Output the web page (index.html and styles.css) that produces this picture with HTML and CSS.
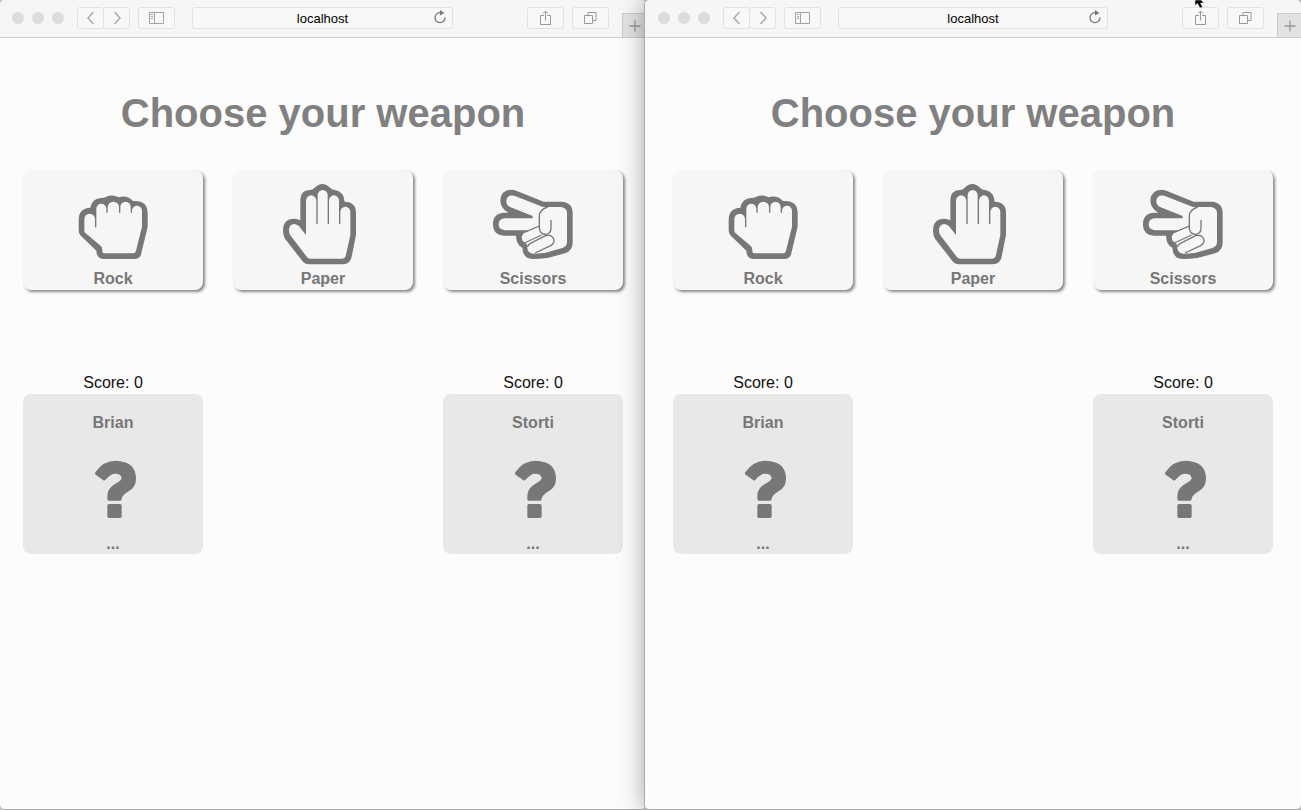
FILE: index.html
```html
<!DOCTYPE html>
<html lang="en">
<head>
<meta charset="utf-8">
<title>Choose your weapon</title>
<link rel="stylesheet" href="styles.css">
</head>
<body>
<svg class="sprites" aria-hidden="true">
  <symbol id="back" viewBox="0 0 12 16"><path d="M8.500 2 3 8l5.500 6" fill="none" stroke="#aaa" stroke-width="1.5"/></symbol>
  <symbol id="forward" viewBox="0 0 12 16"><path d="m3.500 2 5.500 6-5.500 6" fill="none" stroke="#aaa" stroke-width="1.5"/></symbol>
  <symbol id="sidebar" viewBox="0 0 16 12"><path d="M.5.5h14v11H.5zM5.500.5v11M2 2.500h2M2 4.500h2M2 6.500h2" fill="none" stroke="#a2a2a2"/></symbol>
  <symbol id="reload" viewBox="0 0 14 14"><path d="M7.500 2.700A5 5 0 1 0 12 7.500" fill="none" stroke="#777" stroke-width="1.3"/><path d="M7 0v5.500L11.500 3z" fill="#777"/></symbol>
  <symbol id="share" viewBox="0 0 12 16"><path d="M4 5.500H.5v9h10v-9H7M5.500 10.500V1.500M3 3.500l2.500-2.500L8 3.500" fill="none" stroke="#999"/></symbol>
  <symbol id="tabs" viewBox="0 0 14 14"><path d="M.5 4.500h8v8h-8zM4 4.500V1.500h8v8H8.500" fill="none" stroke="#999"/></symbol>
  <symbol id="plus" viewBox="0 0 12 12"><path d="M6 .5v11M.5 6h11" fill="none" stroke="#999" stroke-width="1.3"/></symbol>
  <symbol id="rock" viewBox="157 54 270 270">
    <path fill="#777" fill-rule="evenodd" d="M189 180Q189 144 224 143Q230 115 256 114Q266 114 272 110Q291 102 309 112Q333 104 352 123Q396 120 396 160V200L378 275Q376 297 355 297H265Q243 297 242 272L194 226Q189 220 189 210ZM206 213V178A16 17 0 0 1 238 178V202H242V146A15 15 0 0 1 272 146V158H276V142A17 17 0 0 1 310 142V158H314V141A15.500 16 0 0 1 345 141V158H349V152A15 15 0 0 1 379 152V200L361 272Q359 280 352 280H268Q260 280 260 272Q261 261 253 256L210 220Q206 217 206 213Z"/>
  </symbol>
  <symbol id="paper" viewBox="157 54 270 270">
    <path fill="#777" fill-rule="evenodd" d="M172 212Q172 176 206 176Q216 176 224 181V118Q224 92 252 90Q261 90 266 84Q290 60 314 84Q319 90 328 90Q355 95 357 125Q391 126 391 158V225L379 285Q376 313 350 313H250Q238 313 230 303L178 236Q172 226 172 212ZM190 212Q190 192 206 192Q218 193 226 206L241 225V122A15.500 16 0 0 1 272 122V192H276V106A15 16 0 0 1 306 106V192H310V122A15 16 0 0 1 340 122V192H344V156A15 16 0 0 1 374 156V225L361 284Q359 296 348 296H254Q248 296 243 290L194 226Q190 220 190 212Z"/>
  </symbol>
  <symbol id="scissors" viewBox="157 54 270 270">
    <path fill="#777" fill-rule="evenodd" d="M194 121Q196 89 228 89Q235 89 242 92L324 125H378Q411 127 411 160V248Q411 272 388 280L335 294Q310 297 290 297Q262 296 260 263Q242 255 241 227H205Q172 225 172 192Q172 160 205 158H218Q194 146 194 121ZM212 122Q214 103 236 107L322 141H376Q394 143 394 160V246Q394 260 380 264L330 278Q310 281 292 281Q275 280 275 262Q276 252 268 248Q256 243 259 228Q262 220 268 217L282 211H208Q189 209 189 193Q189 176 208 175H291V168L225 142Q211 136 212 122Z"/>
    <path fill="none" stroke="#777" stroke-width="4" d="M336 141Q311 150 311 168V205Q313 223 330 223Q346 222 346 205V180M311 198L266 217M266 249L318 225M276 260Q278 252 290 247L330 227Q350 222 355 240Q356 250 345 257L298 279"/>
  </symbol>
  <symbol id="unknown" viewBox="157 189 270 303">
    <path fill="#777" d="M240 305Q264 272 300 272Q361 274 361 326Q361 350 340 363Q318 376 318 387Q318 392 313 392H280Q275 392 275 386V378Q275 355 298 342Q318 332 318 324Q316 311 298 311Q285 311 271 328Q267 334 262 330L240 314Q235 310 240 305Z"/>
    <rect x="275" y="402" width="43" height="42" rx="5" fill="#777"/>
  </symbol>
</svg>

<div class="desktop">
  <section class="window" aria-label="Player Brian">
    <header class="toolbar">
      <div class="lights"><i class="light"></i><i class="light"></i><i class="light"></i></div>
      <div class="nav">
        <button class="tool nav-tool" aria-label="Back"><svg width="12" height="16"><use href="#back"/></svg></button>
        <button class="tool nav-tool" aria-label="Forward"><svg width="12" height="16"><use href="#forward"/></svg></button>
      </div>
      <button class="tool" aria-label="Sidebar"><svg width="16" height="12"><use href="#sidebar"/></svg></button>
      <div class="address">
        <input class="address-input" aria-label="Address" value="localhost">
        <button class="reload" aria-label="Reload"><svg width="14" height="14"><use href="#reload"/></svg></button>
      </div>
      <button class="tool" aria-label="Share"><svg width="12" height="16"><use href="#share"/></svg></button>
      <button class="tool tabs" aria-label="Show tabs"><svg width="14" height="14"><use href="#tabs"/></svg></button>
      <button class="new-tab" aria-label="New tab"><svg width="12" height="12"><use href="#plus"/></svg></button>
    </header>
    <main class="game">
      <h1 class="title">Choose your weapon</h1>
      <div class="weapons">
        <button class="weapon"><svg width="90" height="90"><use href="#rock"/></svg>Rock</button>
        <button class="weapon"><svg width="90" height="90"><use href="#paper"/></svg>Paper</button>
        <button class="weapon"><svg width="90" height="90"><use href="#scissors"/></svg>Scissors</button>
      </div>
      <div class="players">
        <div class="player">
          <p class="score">Score: 0</p>
          <div class="player-card"><h2 class="name">Brian</h2><svg width="90" height="101"><use href="#unknown"/></svg><p class="status">...</p></div>
        </div>
        <div class="player">
          <p class="score">Score: 0</p>
          <div class="player-card"><h2 class="name">Storti</h2><svg width="90" height="101"><use href="#unknown"/></svg><p class="status">...</p></div>
        </div>
      </div>
    </main>
  </section>

  <section class="window front" aria-label="Player Storti">
    <header class="toolbar">
      <div class="lights"><i class="light"></i><i class="light"></i><i class="light"></i></div>
      <div class="nav">
        <button class="tool nav-tool" aria-label="Back"><svg width="12" height="16"><use href="#back"/></svg></button>
        <button class="tool nav-tool" aria-label="Forward"><svg width="12" height="16"><use href="#forward"/></svg></button>
      </div>
      <button class="tool" aria-label="Sidebar"><svg width="16" height="12"><use href="#sidebar"/></svg></button>
      <div class="address">
        <input class="address-input" aria-label="Address" value="localhost">
        <button class="reload" aria-label="Reload"><svg width="14" height="14"><use href="#reload"/></svg></button>
      </div>
      <button class="tool share" aria-label="Share"><svg width="12" height="16"><use href="#share"/></svg>
        <svg class="pointer" width="12" height="8" viewBox="0 0 12 8"><path d="M1 0v5.500l2.500-2L6 8l2.500-1L6.500 3H10L7 0z" fill="#000" stroke="#fff" stroke-width=".5"/></svg>
      </button>
      <button class="tool tabs" aria-label="Show tabs"><svg width="14" height="14"><use href="#tabs"/></svg></button>
      <button class="new-tab" aria-label="New tab"><svg width="12" height="12"><use href="#plus"/></svg></button>
    </header>
    <main class="game">
      <h1 class="title">Choose your weapon</h1>
      <div class="weapons">
        <button class="weapon"><svg width="90" height="90"><use href="#rock"/></svg>Rock</button>
        <button class="weapon"><svg width="90" height="90"><use href="#paper"/></svg>Paper</button>
        <button class="weapon"><svg width="90" height="90"><use href="#scissors"/></svg>Scissors</button>
      </div>
      <div class="players">
        <div class="player">
          <p class="score">Score: 0</p>
          <div class="player-card"><h2 class="name">Brian</h2><svg width="90" height="101"><use href="#unknown"/></svg><p class="status">...</p></div>
        </div>
        <div class="player">
          <p class="score">Score: 0</p>
          <div class="player-card"><h2 class="name">Storti</h2><svg width="90" height="101"><use href="#unknown"/></svg><p class="status">...</p></div>
        </div>
      </div>
    </main>
  </section>
</div>
</body>
</html>
```
FILE: styles.css
```css
* { box-sizing: border-box; }

body {
  margin: 0;
  background: #c8c8c8;
  color: #111;
  font: 16px/20px "Liberation Sans", Arial, sans-serif;
}

button, input { font: inherit; color: inherit; margin: 0; padding: 0; }
h1, h2, p { margin: 0; }
svg { display: block; }
.sprites { position: absolute; width: 0; height: 0; }

.desktop {
  display: grid;
  grid-template-columns: 646fr 655fr;
  min-height: 100vh;
  overflow: hidden;
}

.window {
  background: #fcfcfc;
  border-bottom: 1px solid #aaa;
  border-radius: 5px;
}

.front {
  position: relative;
  margin-left: -2px;
  border-left: 1px solid #aaa;
  box-shadow: 0 0 24px rgba(0, 0, 0, .35);
}

.toolbar {
  display: flex;
  align-items: center;
  height: 38px;
  padding-left: 12px;
  background: #f6f6f6;
  border-bottom: 1px solid #ccc;
  border-radius: 5px 5px 0 0;
}
.front .toolbar { padding-left: 13px; }

.lights { display: flex; gap: 8px; margin-right: 13px; }
.light { width: 12px; height: 12px; border-radius: 50%; background: #dcdcdc; }

.nav { display: flex; margin-right: 8px; }
.lights, .nav, .tool, .address { margin-bottom: 1px; }

.tool {
  display: flex;
  align-items: center;
  justify-content: center;
  width: 37px;
  height: 22px;
  background: #f8f8f8;
  border: 1px solid #e2e2e2;
  border-radius: 3px;
}

.nav-tool { width: 27px; margin-bottom: 0; }
.nav-tool + .nav-tool { margin-left: -1px; }

.address {
  position: relative;
  flex: 1;
  margin-left: 17px;
  margin-right: 74px;
}

.address-input {
  display: block;
  width: 100%;
  height: 22px;
  background: #f8f8f8;
  border: 1px solid #e2e2e2;
  border-radius: 3px;
  color: #000;
  font-size: 13px;
  text-align: center;
}

.reload {
  position: absolute;
  top: 3px;
  right: 6px;
  background: none;
  border: 0;
}

.share { position: relative; }
.pointer { position: absolute; top: -8px; left: 11px; }
.tabs { margin-left: 8px; margin-right: 13px; }

.new-tab {
  display: flex;
  align-items: center;
  justify-content: center;
  align-self: flex-end;
  width: 24px;
  height: 24px;
  background: #e2e2e2;
  border: solid #ccc;
  border-width: 1px 0 0 1px;
}

.game {
  max-width: 600px;
  margin: 0 auto;
  padding-top: 52px;
}

.title {
  margin-bottom: 34px;
  color: #808080;
  font-size: 40px;
  line-height: 46px;
  text-align: center;
}

.weapons {
  display: grid;
  grid-template-columns: repeat(3, 1fr);
  gap: 30px;
}

.weapon {
  display: flex;
  flex-direction: column;
  align-items: center;
  padding-top: 8px;
  background: #f6f6f6;
  border: 0;
  border-radius: 8px;
  box-shadow: 2px 2px 3px #888;
  color: #777;
  font-weight: bold;
  line-height: 22px;
}

.players {
  display: flex;
  justify-content: space-between;
  margin-top: 82px;
}

.player { width: 30%; }
.score { line-height: 22px; text-align: center; }

.player-card {
  display: flex;
  flex-direction: column;
  align-items: center;
  padding-top: 19px;
  background: #e8e8e8;
  border-radius: 8px;
  color: #777;
}

.name, .status { font-size: 16px; font-weight: bold; line-height: 20px; }
```
